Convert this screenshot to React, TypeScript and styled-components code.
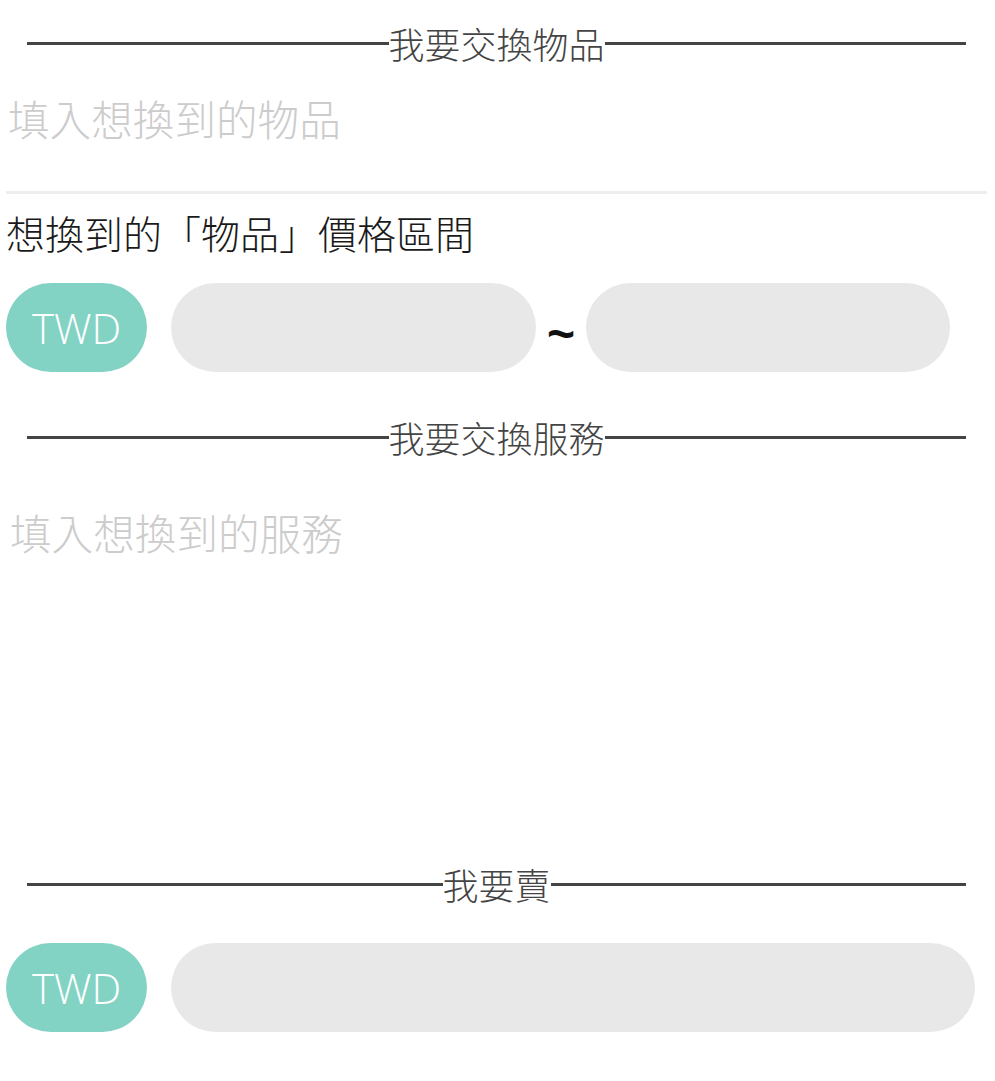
import React from "react";
import styled, { createGlobalStyle } from "styled-components";

const GlobalStyle = createGlobalStyle`
  html, body {
    margin: 0;
    padding: 0;
    background: #fff;
  }
  body {
    font-family: "Noto Sans CJK TC", "Noto Sans", sans-serif;
  }
`;

const App = () => {
  return (
    <Page>
      <GlobalStyle />
      <SectionTitle>我要交換物品</SectionTitle>
      <ItemInput placeholder="填入想換到的物品" />
      <Label>想換到的「物品」價格區間</Label>
      <Row>
        <Currency>TWD</Currency>
        <PriceInput width={365} />
        <Tilde>~</Tilde>
        <PriceInput width={364} />
      </Row>
      <SectionTitle top={43}>我要交換服務</SectionTitle>
      <ServiceInput placeholder="填入想換到的服務" />
      <SectionTitle>我要賣</SectionTitle>
      <Row top={37}>
        <Currency>TWD</Currency>
        <PriceInput width={804} />
      </Row>
    </Page>
  );
};

const Page = styled.div`
  width: 981px;
  padding: 21px 8px 40px 6px;
  display: flex;
  flex-direction: column;
`;

const SectionTitle = styled.div<{ top?: number }>`
  display: flex;
  align-items: center;
  margin: ${(p) => p.top || 0}px 21px 0;
  height: 44px;
  font-size: 36px;
  font-weight: 300;
  line-height: 44px;
  color: #444;
  white-space: nowrap;

  &::before,
  &::after {
    content: "";
    flex: 1;
    height: 3px;
    background: #444;
  }
`;

const ItemInput = styled.input`
  box-sizing: border-box;
  width: 100%;
  height: 129px;
  padding: 0 0 20px 2px;
  border: none;
  border-bottom: 3px solid #eee;
  outline: none;
  font-family: inherit;
  font-size: 41.6px;
  font-weight: 300;
  color: #333;
  background: transparent;

  &::placeholder {
    color: #ccc;
  }
`;

const Label = styled.div`
  margin-top: 13px;
  font-size: 39px;
  font-weight: 300;
  line-height: 50px;
  color: #1a1a1a;
`;

const Row = styled.div<{ top?: number }>`
  display: flex;
  align-items: center;
  margin-top: ${(p) => p.top || 26}px;
  height: 89px;
`;

const Currency = styled.div`
  width: 141px;
  height: 89px;
  border-radius: 45px;
  background: #83d3c4;
  color: #fff;
  display: flex;
  align-items: center;
  justify-content: center;
  font-family: "Open Sans", sans-serif;
  font-size: 42px;
  font-weight: 300;
  margin-right: 24px;
`;

const PriceInput = styled.input<{ width: number }>`
  box-sizing: border-box;
  width: ${(p) => p.width}px;
  height: 89px;
  border: none;
  border-radius: 45px;
  background: #e8e8e8;
  outline: none;
  padding: 0 30px;
  font-family: inherit;
  font-size: 36px;
`;

const Tilde = styled.span`
  width: 50px;
  padding-top: 11px;
  text-align: center;
  font-family: "Liberation Sans", sans-serif;
  font-size: 48px;
  font-weight: 700;
  color: #111;
`;

const ServiceInput = styled.textarea`
  box-sizing: border-box;
  width: 100%;
  height: 403px;
  padding: 43px 0 0 4px;
  border: none;
  outline: none;
  resize: none;
  font-family: inherit;
  font-size: 41.6px;
  font-weight: 300;
  line-height: 60px;
  color: #333;
  background: transparent;

  &::placeholder {
    color: #ccc;
  }
`;

export default App;
